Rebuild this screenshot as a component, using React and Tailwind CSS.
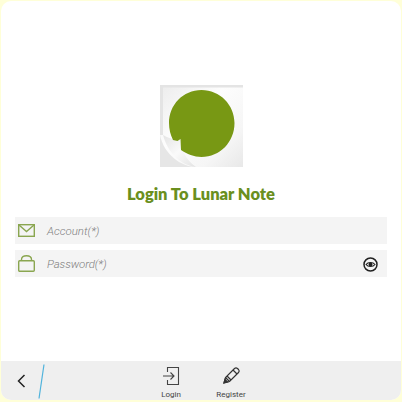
const Logo = () => (
  <svg width="84" height="84" viewBox="0 0 84 84">
    <defs>
      <linearGradient id="paper" x1="0" y1="0" x2="1" y2="1">
        <stop offset="0" stopColor="#ececec" />
        <stop offset="0.4" stopColor="#fdfdfd" />
        <stop offset="0.75" stopColor="#f6f6f6" />
        <stop offset="1" stopColor="#e8e8e8" />
      </linearGradient>
      <linearGradient id="curl" x1="0" y1="0" x2="1" y2="1">
        <stop offset="0" stopColor="#e4e4e4" />
        <stop offset="0.5" stopColor="#fafafa" />
        <stop offset="1" stopColor="#e2e2e2" />
      </linearGradient>
    </defs>
    <rect x="0" y="0" width="83" height="82" fill="url(#paper)" />
    <path d="M0 0H83V2.5H3V50H0Z" fill="#e4e4e4" />
    <path d="M0 50C4 70 22 82 36 82H0Z" fill="#e6e6e6" />
    <path d="M3 50C8 53 14 55 20 54C21 64 25 74 36 82C20 80 8 68 3 50Z" fill="url(#curl)" />
    <path d="M41.5 5C60 5 74.5 20 74.5 38C74.5 57 60 72 41.5 72C34 72 27 69 21 65L20.5 54L17.5 56L13 55C10.5 50 9 44 9 38C9 20 23 5 41.5 5Z" fill="#789814" />
  </svg>
);

const MailIcon = () => (
  <svg width="17" height="13" viewBox="0 0 17 13" fill="none" stroke="#8aa650" strokeWidth="1.4">
    <rect x="0.7" y="0.7" width="15.6" height="11.6" />
    <path d="M1 1L8.5 7.5L16 1" />
  </svg>
);

const LockIcon = () => (
  <svg width="17" height="17" viewBox="0 0 17 17" fill="none" stroke="#8aa650" strokeWidth="1.4">
    <rect x="0.7" y="5.7" width="15.6" height="10.6" rx="1" />
    <path d="M3.5 5.5V4.5C3.5 2 5.5 0.7 8.5 0.7S13.5 2 13.5 4.5V5.5" />
  </svg>
);

const EyeIcon = () => (
  <svg width="15" height="15" viewBox="0 0 15 15" fill="none">
    <circle cx="7.5" cy="7.5" r="6.5" stroke="#222" strokeWidth="1.5" />
    <path d="M3 7.5C5 4.8 10 4.8 12 7.5C10 10.2 5 10.2 3 7.5Z" stroke="#222" strokeWidth="1.1" />
    <circle cx="7.5" cy="7.5" r="1.9" fill="#222" />
  </svg>
);

const LoginIcon = () => (
  <svg width="17" height="18" viewBox="0 0 17 18" fill="none" stroke="#444" strokeWidth="1.1">
    <path d="M4.5 5V0.5H15.5V17.5H4.5V13" />
    <path d="M0 9H10.5M7.5 5.5L11 9L7.5 12.5" />
  </svg>
);

const PencilIcon = () => (
  <svg width="17" height="17" viewBox="0 0 17 17" fill="none" stroke="#333" strokeWidth="1.2">
    <path d="M1 16L2.5 10.5L11.5 1.5C12.5 0.7 13.5 0.7 14.5 1.5L15.5 2.5C16.3 3.5 16.3 4.5 15.5 5.5L6.5 14.5Z" />
    <path d="M10 3L14 7M2.5 10.5L6.5 14.5M4 9L8 13" />
    <path d="M1 16L2 12.5L4.5 15Z" fill="#333" />
  </svg>
);

export default function App() {
  return (
    <div className="w-[402px] h-[402px] bg-[#ffffd8] p-[1px] pb-[2px] font-['Open_Sans',sans-serif]">
      <div className="h-full flex flex-col bg-white rounded-[10px] overflow-hidden">
        <div className="flex justify-center pt-[84px] pl-[1px]">
          <Logo />
        </div>
        <h1 className="mt-[15px] text-center text-[16.5px] leading-[20px] font-extrabold text-[#6a8f1e] font-['Lato',sans-serif]">
          Login To Lunar Note
        </h1>
        <div className="mt-[13px] mx-[14px] flex flex-col gap-[6px]">
          <div className="h-[27px] bg-[#f4f4f4] flex items-center pl-[3px]">
            <MailIcon />
            <span className="ml-[12px] pt-[2px] text-[11.5px] italic font-light font-['Roboto',sans-serif] text-[#808080]">Account(*)</span>
          </div>
          <div className="h-[27px] bg-[#f4f4f4] flex items-center pl-[3px] pr-[9px]">
            <LockIcon />
            <span className="ml-[12px] pt-[2px] text-[11.5px] tracking-[-0.1px] italic font-light font-['Roboto',sans-serif] text-[#808080]">Password(*)</span>
            <span className="ml-auto pt-[1px]"><EyeIcon /></span>
          </div>
        </div>
        <div className="mt-auto h-[39px] bg-[#efefef] flex items-start relative">
          <svg className="mt-[13px] ml-[16px]" width="9" height="14" viewBox="0 0 9 14" fill="none" stroke="#222" strokeWidth="1.5">
            <path d="M7.5 1L1.5 7L7.5 13" />
          </svg>
          <svg className="mt-[3px] ml-[12px]" width="7" height="35" viewBox="0 0 7 35" fill="none" stroke="#4fb3dc" strokeWidth="1.2">
            <path d="M6 0.5L1 34.5" />
          </svg>
          <div className="ml-[106px] w-[40px] flex flex-col items-center">
            <div className="h-[29px] pt-[6px]"><LoginIcon /></div>
            <span className="text-[8px] leading-[10px] text-[#444] font-['Roboto',sans-serif]">Login</span>
          </div>
          <div className="ml-[20px] w-[40px] flex flex-col items-center">
            <div className="h-[29px] pt-[6px]"><PencilIcon /></div>
            <span className="text-[8px] leading-[10px] text-[#444] font-['Roboto',sans-serif]">Register</span>
          </div>
        </div>
      </div>
    </div>
  );
}
